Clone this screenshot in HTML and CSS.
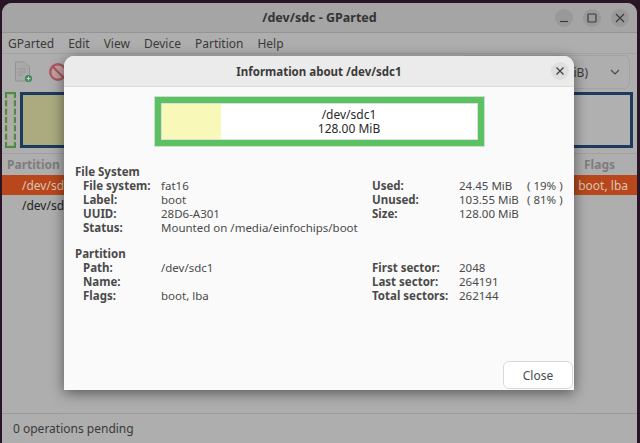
FILE: index.html
```html
<!DOCTYPE html>
<html lang="en">
<head>
  <meta charset="UTF-8" />
  <meta name="viewport" content="width=device-width, initial-scale=1.0" />
  <title>/dev/sdc - GParted</title>
  <link rel="stylesheet" href="styles.css">
</head>
<body>
  <div class="window">
    <div class="titlebar">
      <span class="title">/dev/sdc - GParted</span>
      <div class="win-buttons">
        <span class="win-btn"><svg width="12" height="12" viewBox="0 0 12 12"><path d="M2 9.5h8" stroke="#3c3c3c" stroke-width="1.2"/></svg></span>
        <span class="win-btn"><svg width="12" height="12" viewBox="0 0 12 12"><rect x="2" y="2" width="8" height="8" rx="1" fill="none" stroke="#3c3c3c" stroke-width="1.2"/></svg></span>
        <span class="win-btn"><svg width="12" height="12" viewBox="0 0 12 12"><path d="M2 2l8 8M10 2l-8 8" stroke="#3c3c3c" stroke-width="1.2"/></svg></span>
      </div>
    </div>

    <div class="menubar">
      <span>GParted</span>
      <span>Edit</span>
      <span>View</span>
      <span>Device</span>
      <span>Partition</span>
      <span>Help</span>
    </div>

    <div class="toolbar">
      <svg class="tool-icon" width="20" height="22" viewBox="0 0 20 22">
        <path d="M2.5 1h9l5 5v14h-14z" fill="#a9a9a9" stroke="#939393"/>
        <path d="M5 8h8M5 11h8M5 14h5" stroke="#959595"/>
        <circle cx="15.5" cy="17.5" r="3.6" fill="#3f8a58"/>
        <path d="M13.5 17.5h4M15.5 15.5v4" stroke="#c9d6cc"/>
      </svg>
      <svg class="tool-icon" width="20" height="20" viewBox="0 0 20 20">
        <circle cx="10" cy="10" r="7.8" fill="#c4a0a0" stroke="#a85a5f" stroke-width="2.4"/>
        <path d="M4.5 4.5l11 11" stroke="#a85a5f" stroke-width="2.4"/>
      </svg>
      <div class="device-select">
        <span class="device-name">0 GiB)</span>
        <svg width="12" height="12" viewBox="0 0 12 12"><path d="M2 4l4 4 4-4" fill="none" stroke="#4a4a4a" stroke-width="1.2"/></svg>
      </div>
    </div>

    <div class="graph">
      <div class="graph-unalloc"></div>
      <div class="graph-part"></div>
      <div class="graph-rest"></div>
    </div>

    <div class="list">
      <div class="list-head">
        <span>Partition</span>
        <span>Flags</span>
      </div>
      <div class="list-row selected">
        <span>/dev/sdc1</span>
        <span>boot, lba</span>
      </div>
      <div class="list-row">
        <span>/dev/sdc2</span>
      </div>
    </div>

    <div class="statusbar">0 operations pending</div>
  </div>

  <div class="dialog">
    <div class="dialog-head">
      <span class="dialog-title">Information about /dev/sdc1</span>
      <span class="dialog-x"><svg width="10" height="10" viewBox="0 0 10 10"><path d="M1.5 1.5l7 7M8.5 1.5l-7 7" stroke="#3c3c3c" stroke-width="1.2"/></svg></span>
    </div>

    <div class="dialog-body">
      <div class="usage-bar">
        <div class="usage-inner">
          <div class="usage-used"></div>
          <div class="usage-text">/dev/sdc1<br>128.00 MiB</div>
        </div>
      </div>

      <h2 class="section-title first">File System</h2>
      <div class="info-grid">
        <b>File system:</b><span>fat16</span><b>Used:</b><span>24.45 MiB</span><span>( 19% )</span>
        <b>Label:</b><span>boot</span><b>Unused:</b><span>103.55 MiB</span><span>( 81% )</span>
        <b>UUID:</b><span>28D6-A301</span><b>Size:</b><span>128.00 MiB</span><span></span>
        <b>Status:</b><span class="wide">Mounted on /media/einfochips/boot</span>
      </div>

      <h2 class="section-title">Partition</h2>
      <div class="info-grid">
        <b>Path:</b><span>/dev/sdc1</span><b>First sector:</b><span>2048</span><span></span>
        <b>Name:</b><span></span><b>Last sector:</b><span>264191</span><span></span>
        <b>Flags:</b><span>boot, lba</span><b>Total sectors:</b><span>262144</span><span></span>
      </div>
    </div>

    <div class="dialog-foot">
      <button class="close-btn">Close</button>
    </div>
  </div>
</body>
</html>
```

FILE: styles.css
```css
* {
  box-sizing: border-box;
}
html, body {
  height: 100%;
}
body {
  margin: 0;
  padding: 3px 3px 0 2px;
  overflow: hidden;
  background-color: #2a1526;
  font-family: "Noto Sans", "Open Sans", sans-serif;
  font-size: 12px;
  color: #3a3a3a;
}
.window {
  height: 440px;
  display: flex;
  flex-direction: column;
  background-color: #aeaeae;
  border-radius: 10px 10px 0 0;
}
.titlebar {
  height: 30px;
  flex: none;
  position: relative;
  display: flex;
  align-items: center;
  justify-content: center;
  background-color: #a5a5a5;
  border-bottom: 1px solid #949494;
  border-radius: 10px 10px 0 0;
}
.title {
  font-weight: 700;
  font-size: 12.5px;
  color: #333;
}
.win-buttons {
  position: absolute;
  right: 8px;
  top: 6px;
  display: flex;
  gap: 10px;
}
.win-btn {
  width: 18px;
  height: 18px;
  border-radius: 50%;
  background-color: #999;
  display: flex;
  align-items: center;
  justify-content: center;
}
.menubar {
  height: 21px;
  flex: none;
  display: flex;
  align-items: center;
  gap: 14px;
  padding-left: 6px;
  background-color: #aeaeae;
  border-bottom: 1px solid #a2a2a2;
}
.toolbar {
  height: 36px;
  flex: none;
  display: flex;
  align-items: center;
  padding: 0 0 0 11px;
  gap: 15px;
}
.device-select {
  margin-left: auto;
  margin-right: 7px;
  width: 169px;
  height: 34px;
  display: flex;
  align-items: center;
  justify-content: flex-end;
  gap: 21px;
  padding-right: 8px;
  border: 1px solid #a2a2a2;
  border-radius: 6px;
}
.graph {
  height: 58px;
  flex: none;
  display: flex;
  gap: 4px;
  padding: 2px 4px 0 3px;
}
.graph-unalloc {
  width: 11px;
  border: 3px dashed #4c8a4c;
  outline: 1px solid #a9a97c;
  outline-offset: -3px;
}
.graph-part {
  width: 200px;
  background-color: #abab7f;
  border: 3px solid #1d3a5f;
}
.graph-rest {
  flex: 1;
  border: 3px solid #1d3a5f;
  border-left: none;
  background-color: #b0b0b0;
}
.list {
  flex: 1;
  margin-top: 5px;
  border-top: 1px solid #a0a0a0;
}
.list-head {
  height: 21px;
  display: flex;
  justify-content: space-between;
  align-items: center;
  padding: 0 22px 0 5px;
  font-weight: 700;
  color: #7d7d7d;
}
.list-row {
  height: 20px;
  display: flex;
  justify-content: space-between;
  align-items: center;
  padding: 0 9px 0 20px;
  color: #222;
}
.list-row.selected {
  background-color: #b8481b;
  color: #d9c3b8;
}
.statusbar {
  height: 30px;
  flex: none;
  display: flex;
  align-items: center;
  padding-left: 11px;
  border-top: 1px solid #9a9a9a;
}

.dialog {
  position: absolute;
  left: 64px;
  top: 56px;
  width: 510px;
  height: 334px;
  display: flex;
  flex-direction: column;
  background-color: #fafafa;
  border-radius: 10px 10px 0 0;
  box-shadow: 0 3px 14px rgba(0, 0, 0, 0.5);
}
.dialog-head {
  height: 31px;
  flex: none;
  position: relative;
  display: flex;
  align-items: center;
  justify-content: center;
  background-color: #ebebeb;
  border-bottom: 1px solid #dcdcdc;
  border-radius: 10px 10px 0 0;
}
.dialog-title {
  font-weight: 700;
  font-size: 11.5px;
  color: #3a3a3a;
}
.dialog-x {
  position: absolute;
  right: 5px;
  top: 6px;
  width: 18px;
  height: 18px;
  border-radius: 50%;
  background-color: #dedede;
  display: flex;
  align-items: center;
  justify-content: center;
}
.dialog-body {
  flex: 1;
  padding: 9px 11px 0;
  font-size: 11.5px;
  line-height: 14px;
  color: #4a4a4a;
}
.usage-bar {
  width: 331px;
  height: 51px;
  margin-left: 79px;
  border: 7px solid #5cc162;
  outline: 1px solid #cfdcd0;
  outline-offset: -1px;
}
.usage-inner {
  height: 100%;
  display: flex;
  position: relative;
  background-color: #fff;
  border: 1px solid #ddd;
}
.usage-used {
  width: 59px;
  background-color: #f8f8b8;
}
.usage-text {
  flex: 1;
  align-self: center;
  text-align: center;
  font-size: 12px;
  color: #2a2a2a;
}
.section-title {
  margin: 12px 0 0;
  font-size: 11.5px;
  font-weight: 700;
  line-height: 14px;
}
.section-title.first {
  margin-top: 18px;
}
.info-grid {
  display: grid;
  grid-template-columns: 78px 211px 87px 68px auto;
  padding-left: 8px;
}
.info-grid b {
  font-weight: 700;
}
.info-grid .wide {
  grid-column: 2 / span 2;
}
.dialog-foot {
  flex: none;
  display: flex;
  justify-content: flex-end;
  padding: 0 1px 1px 0;
}
.close-btn {
  width: 70px;
  height: 28px;
  font: inherit;
  font-size: 12px;
  color: #4a4a4a;
  background-color: #fff;
  border: 1px solid #d8d8d8;
  border-radius: 6px;
}
```
